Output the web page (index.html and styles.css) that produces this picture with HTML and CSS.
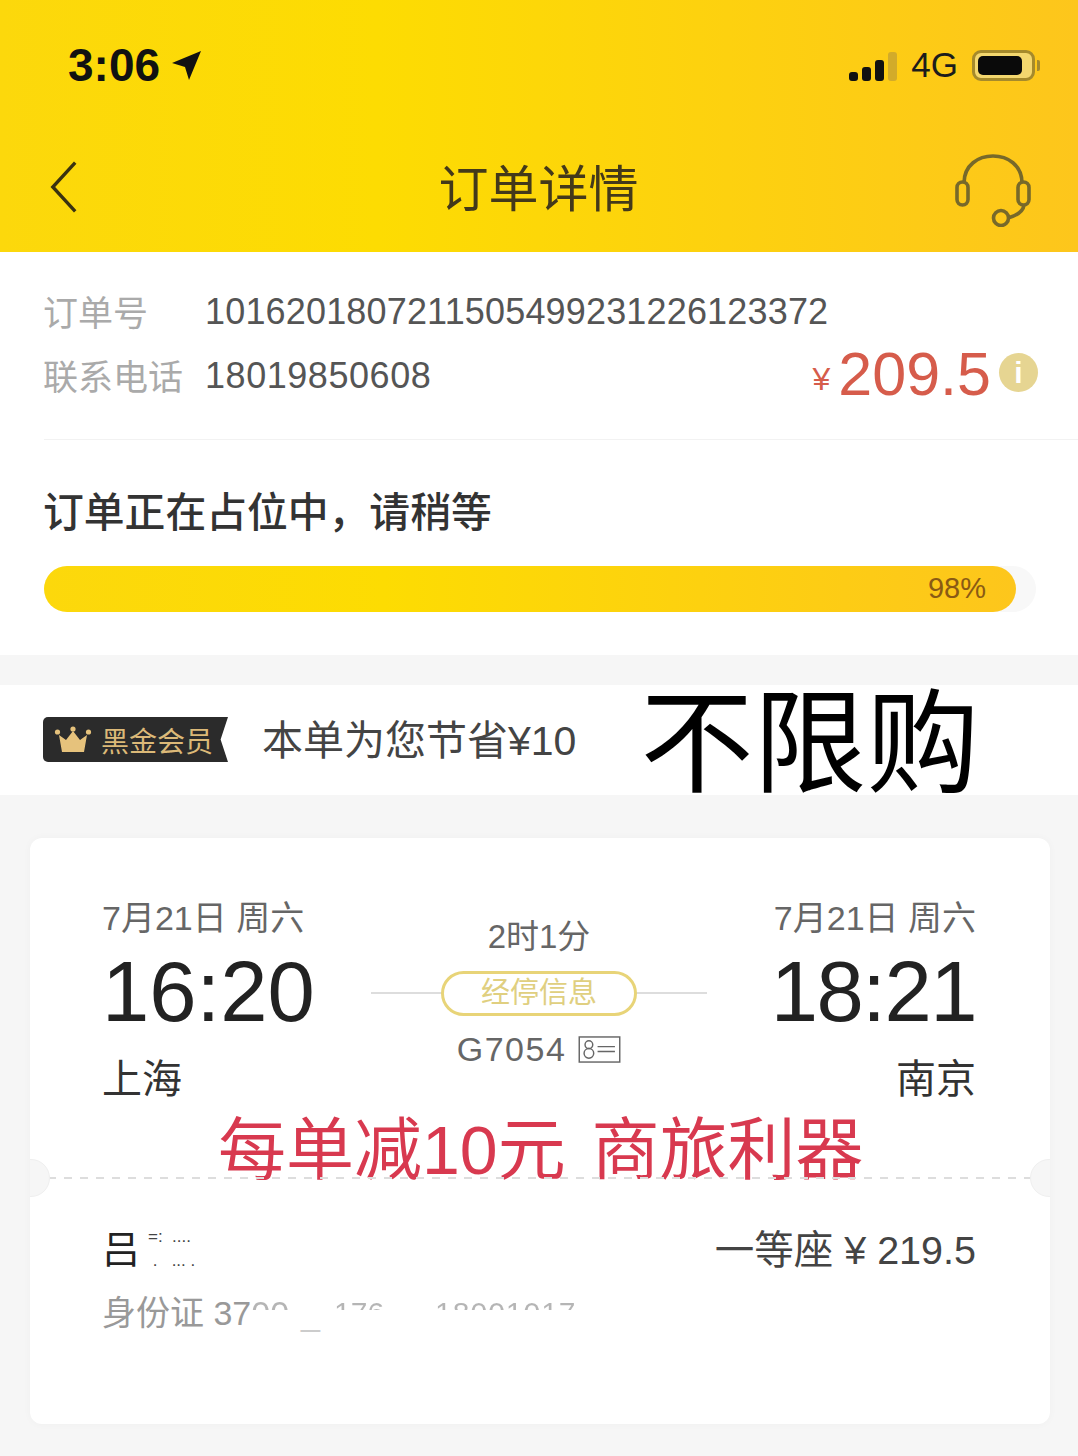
FILE: index.html
```html
<!DOCTYPE html>
<html lang="zh-CN">
<head>
  <meta charset="UTF-8" />
  <meta name="viewport" content="width=device-width, initial-scale=1.0" />
  <title>订单详情</title>
  <link rel="stylesheet" href="styles.css">
</head>
<body>
  <header class="top">
    <div class="status-bar">
      <div class="clock">
        <span>3:06</span>
        <svg class="loc" viewBox="0 0 32 32"><path d="M31 2 L2 14 L15 18 L19 31 Z" fill="#111"/></svg>
      </div>
      <div class="sys">
        <span class="bars"><i class="b1"></i><i class="b2"></i><i class="b3"></i><i class="b4"></i></span>
        <span class="net">4G</span>
        <span class="battery"><i></i></span>
        <span class="battery-tip"></span>
      </div>
    </div>
    <nav class="nav">
      <svg class="back" viewBox="0 0 30 56"><path d="M27 2 L3 28 L27 54" fill="none" stroke="#3a3210" stroke-width="3.6"/></svg>
      <h1>订单详情</h1>
      <svg class="headset" viewBox="0 0 76 74" fill="none" stroke="#77692a" stroke-width="3.6">
        <path d="M9 30 C9 -6 67 -6 67 30"/>
        <rect x="2" y="29" width="11" height="23" rx="5.5"/>
        <rect x="63" y="29" width="11" height="23" rx="5.5"/>
        <path d="M69 52 C68 60 60 63 53 65"/>
        <circle cx="46" cy="65" r="7.5"/>
      </svg>
    </nav>
  </header>

  <section class="order">
    <div class="order-info">
      <div class="row"><span class="label">订单号</span><span class="value order-no">1016201807211505499231226123372</span></div>
      <div class="row">
        <span class="label">联系电话</span><span class="value phone">18019850608</span>
        <span class="price"><small>¥</small>209.5<b class="info">i</b></span>
      </div>
    </div>
    <div class="progress-box">
      <h2>订单正在占位中，请稍等</h2>
      <div class="track"><div class="fill" style="width:972px">98%</div></div>
    </div>
  </section>

  <section class="vip">
    <span class="vip-tag">
      <svg class="crown" viewBox="0 0 38 28">
        <path d="M5 9 L12 14 L19 5 L26 14 L33 9 L30 26 L8 26 Z" fill="#e6c27c"/>
        <circle cx="3.5" cy="6" r="2.6" fill="#e6c27c"/>
        <circle cx="19" cy="3" r="2.6" fill="#e6c27c"/>
        <circle cx="34.5" cy="6" r="2.6" fill="#e6c27c"/>
      </svg>
      黑金会员
    </span>
    <span class="save">本单为您节省¥10</span>
    <span class="stamp">不限购</span>
  </section>

  <main class="page">
    <div class="card">
      <div class="route">
        <div class="stop">
          <div class="date">7月21日 周六</div>
          <div class="time">16:20</div>
          <div class="city">上海</div>
        </div>
        <div class="middle">
          <div class="duration">2时1分</div>
          <div class="stops-line"><span class="pill">经停信息</span></div>
          <div class="train">G7054
            <svg class="idcard" viewBox="0 0 44 28" fill="none" stroke="#666" stroke-width="1.5">
              <rect x="1" y="1" width="42" height="26"/>
              <circle cx="11" cy="9" r="4"/><circle cx="11" cy="18" r="5"/>
              <path d="M20 11 H38 M20 16 H38"/>
            </svg>
          </div>
        </div>
        <div class="stop stop-right">
          <div class="date">7月21日 周六</div>
          <div class="time">18:21</div>
          <div class="city">南京</div>
        </div>
      </div>

      <div class="promo">每单减10元 商旅利器</div>
      <div class="tear"></div>

      <div class="passenger">
        <div class="name-line">
          <span class="name">吕
            <span class="blurred"><span>=:  ....</span><span> .   ... .</span></span>
          </span>
          <span class="seat">一等座 ¥ 219.5</span>
        </div>
        <div class="idno">身份证 37<span class="scrap">00</span><span class="under">_</span><span class="scrap gap-s">176</span><span class="scrap gap-l">18001017</span></div>
      </div>
    </div>
  </main>
</body>
</html>
```

FILE: styles.css
```css
* {
  box-sizing: border-box;
}

html, body {
  margin: 0;
  height: 1456px;
  overflow: hidden;
}

body {
  font-family: "Liberation Sans", "Noto Sans CJK SC", sans-serif;
  background: #f6f6f6;
  color: #333;
}

/* header */
.top {
  height: 252px;
  background: linear-gradient(90deg, #fcd80c 0%, #fddc02 35%, #fdc61c 100%);
}

.status-bar {
  height: 130px;
  padding: 42px 38px 0 68px;
  display: flex;
  justify-content: space-between;
  align-items: flex-start;
}

.clock {
  display: flex;
  align-items: center;
  gap: 10px;
  font-size: 46px;
  line-height: 46px;
  font-weight: 700;
  color: #111;
}

.loc {
  width: 32px;
  height: 32px;
}

.sys {
  display: flex;
  align-items: center;
  height: 46px;
}

.bars {
  display: flex;
  align-items: flex-end;
  gap: 4px;
  height: 30px;
  margin-top: 2px;
}

.bars i {
  width: 9px;
  border-radius: 3px;
  background: #111;
}

.b1 { height: 9px; }
.b2 { height: 14px; }
.b3 { height: 21px; }
.bars .b4 { height: 29px; background: #d2ab2a; }

.net {
  margin-left: 14px;
  font-size: 35px;
  color: #1c1c1c;
}

.battery {
  margin-left: 14px;
  width: 63px;
  height: 31px;
  border: 3px solid #a58a2c;
  border-radius: 9px;
  padding: 3px;
  background: #f3d76e;
}

.battery i {
  display: block;
  width: 44px;
  height: 100%;
  background: #0a0a0a;
  border-radius: 5px;
}

.battery-tip {
  width: 3px;
  height: 11px;
  margin-left: 2px;
  background: #a58a2c;
  border-radius: 0 2px 2px 0;
}

.nav {
  height: 122px;
  padding: 0 47px 0 50px;
  display: flex;
  justify-content: space-between;
  align-items: center;
}

.nav h1 {
  margin: 0 0 12px 44px;
  font-size: 50px;
  font-weight: 400;
  color: #43391a;
}

.back {
  width: 28px;
  height: 56px;
  margin-top: -8px;
}

.headset {
  width: 76px;
  height: 74px;
  margin-top: -2px;
}

/* order block */
.order {
  background: #fff;
  height: 403px;
}

.order-info {
  margin-left: 44px;
  height: 188px;
  padding-top: 28px;
  border-bottom: 1px solid #f2f2f2;
}

.row {
  display: flex;
  align-items: center;
  height: 64px;
  padding-right: 40px;
}

.label {
  width: 161px;
  margin-left: -1px;
  margin-right: 1px;
  margin-top: -4px;
  font-size: 35px;
  color: #aaa;
}

.value {
  font-size: 36px;
  color: #555;
}

.order-no {
  letter-spacing: 0.17px;
}

.phone {
  letter-spacing: 0.55px;
}

.price {
  margin-left: auto;
  margin-top: -4px;
  display: flex;
  align-items: center;
  font-size: 61px;
  line-height: 64px;
  color: #d65c4b;
}

.price small {
  font-size: 32px;
  margin-right: 8px;
  margin-top: 10px;
}

.info {
  width: 39px;
  height: 39px;
  margin-left: 8px;
  margin-top: -4px;
  border-radius: 50%;
  background: #e6d592;
  color: #fff;
  font-size: 30px;
  line-height: 39px;
  text-align: center;
}

.progress-box {
  padding: 44px 44px 0;
}

.progress-box h2 {
  margin: 0 0 0 -1px;
  font-size: 40.8px;
  line-height: 58px;
  font-weight: 500;
  color: #333;
}

.track {
  margin-top: 24px;
  width: 992px;
  height: 46px;
  border-radius: 23px;
  background: #f8f8f8;
}

.fill {
  height: 46px;
  border-radius: 23px;
  background: linear-gradient(90deg, #fcd80c 0%, #fddc02 35%, #fdc61c 100%);
  padding-right: 30px;
  text-align: right;
  font-size: 29px;
  line-height: 44px;
  color: #8a5a14;
}

/* vip row */
.vip {
  margin-top: 30px;
  height: 110px;
  background: #fff;
  padding-left: 43px;
  display: flex;
  align-items: center;
}

.vip-tag {
  width: 185px;
  height: 45px;
  margin-top: -1px;
  display: flex;
  align-items: center;
  gap: 9px;
  padding-left: 11px;
  background: #2b2b2b;
  border-radius: 5px 0 0 5px;
  clip-path: polygon(0 0, 100% 0, 96% 50%, 100% 100%, 0 100%);
  font-size: 28px;
  color: #dcb978;
  white-space: nowrap;
}

.crown {
  width: 38px;
  height: 28px;
  flex: none;
}

.save {
  margin-left: 34px;
  margin-top: -6px;
  font-size: 41px;
  color: #444;
  white-space: nowrap;
}

.stamp {
  margin-left: 64px;
  margin-top: 8px;
  font-size: 113px;
  line-height: 110px;
  color: #000;
  white-space: nowrap;
}

/* ticket card */
.page {
  padding: 43px 28px 0 30px;
}

.card {
  position: relative;
  height: 586px;
  background: #fff;
  border-radius: 12px;
  box-shadow: 0 0 8px rgba(0,0,0,0.03);
  padding: 55px 74px 0 72px;
  overflow: hidden;
}

.route {
  display: flex;
  justify-content: space-between;
}

.stop {
  width: 260px;
}

.stop-right {
  text-align: right;
}

.date {
  font-size: 34px;
  line-height: 50px;
  color: #666;
}

.time {
  font-size: 85px;
  line-height: 96px;
  margin-top: 1px;
  color: #222;
}

.stop-right .time {
  letter-spacing: -1.5px;
}

.city {
  font-size: 40px;
  line-height: 60px;
  margin-top: 9px;
  color: #333;
}

.middle {
  width: 336px;
  padding-top: 19px;
  text-align: center;
}

.duration {
  font-size: 33px;
  line-height: 50px;
  color: #666;
}

.stops-line {
  display: flex;
  justify-content: center;
  align-items: center;
  height: 46px;
  margin-top: 8px;
  background: linear-gradient(#ddd, #ddd) center / 100% 2px no-repeat;
}

.pill {
  width: 196px;
  height: 45px;
  border: 3px solid #e8d478;
  border-radius: 23px;
  background: #fff;
  font-size: 29px;
  line-height: 38px;
  color: #e0cf80;
}

.train {
  margin-top: 8px;
  display: flex;
  justify-content: center;
  align-items: center;
  gap: 12px;
  font-size: 34px;
  line-height: 50px;
  letter-spacing: 1.5px;
  color: #666;
}

.idcard {
  width: 43px;
  height: 27px;
}

.promo {
  position: absolute;
  left: 188px;
  top: 272px;
  font-size: 68px;
  line-height: 80px;
  word-spacing: 7px;
  color: #d8394f;
  white-space: nowrap;
}

.tear {
  position: absolute;
  left: 0;
  right: 0;
  top: 339px;
  height: 2px;
  margin: 0 18px;
  background: repeating-linear-gradient(90deg, #ddd 0 8px, transparent 8px 16px);
}

.tear::before,
.tear::after {
  content: "";
  position: absolute;
  top: -18px;
  width: 36px;
  height: 36px;
  border-radius: 50%;
  background: #f6f6f6;
  border: 1px solid #efefef;
}

.tear::before { left: -36px; }
.tear::after { right: -36px; }

.passenger {
  position: absolute;
  left: 72px;
  right: 74px;
  top: 378px;
}

.name-line {
  display: flex;
  justify-content: space-between;
  align-items: center;
  height: 60px;
}

.name {
  display: flex;
  align-items: center;
  gap: 8px;
  font-size: 38px;
  color: #222;
}

.blurred {
  display: flex;
  flex-direction: column;
  margin-top: 6px;
  font-size: 17px;
  line-height: 24px;
  color: #444;
  white-space: pre;
}

.seat {
  font-size: 39.5px;
  color: #444;
}

.idno {
  display: flex;
  margin-top: 12px;
  font-size: 34px;
  line-height: 50px;
  color: #999;
  white-space: nowrap;
}

/* id number is half wiped in the original, only the tops of digits show */
.scrap {
  background: linear-gradient(#b5b5b5 44%, transparent 44%);
  -webkit-background-clip: text;
  background-clip: text;
  color: transparent;
}

.under {
  margin-left: 12px;
  color: #ccc;
}

.gap-s {
  margin-left: 14px;
  font-size: 30px;
}

.gap-l {
  margin-left: 51px;
  letter-spacing: 1px;
  font-size: 30px;
}
```
